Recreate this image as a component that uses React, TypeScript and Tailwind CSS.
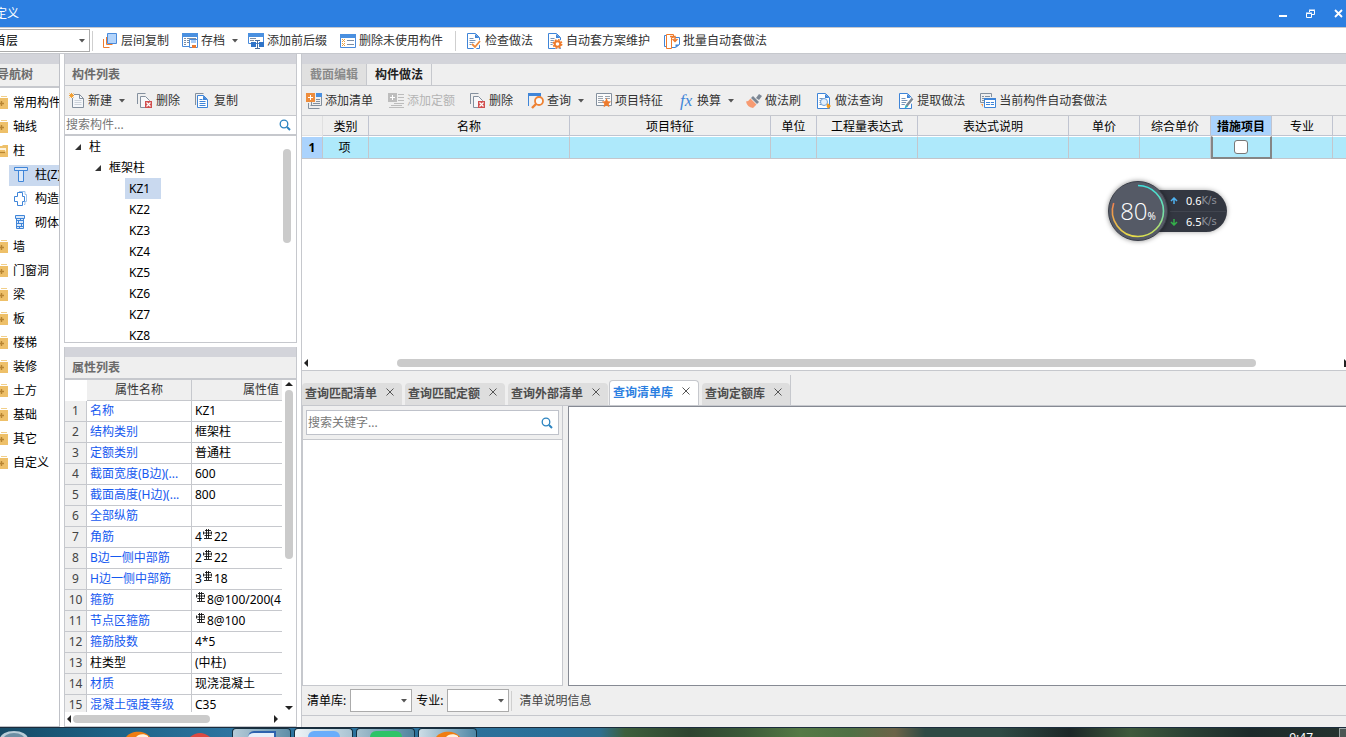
import { useState } from "react";
import type { ReactNode } from "react";

type IconProps = { children: ReactNode; className?: string };

function Icon({ children, className = "" }: IconProps) {
  return (
    <svg viewBox="0 0 16 16" className={`size-4 shrink-0 ${className}`} fill="none" aria-hidden="true">
      {children}
    </svg>
  );
}

const CopyLayers = () => (
  <Icon>
    <path d="M1.500 6v8.500h6M4.500 4v7.500h6" stroke="#ee7b2d" />
    <path d="M5.500.500h9v10h-9z" fill="#b3d4fb" stroke="#4a8bdb" />
  </Icon>
);
const Archive = () => (
  <Icon>
    <path d="M.5 1.500h15v12H.500z" fill="#fff" stroke="#4a8bdb" />
    <path d="M0 0h16v4H0z" fill="#4a90e0" />
    <path d="M2 5.500h2M5 5.500h9M2 7.500h2M5 7.500h2M2 9.500h2M5 9.500h2M2 11.500h2" stroke="#7d8ea3" />
    <path d="M7.500 6.500h8v8h-8z" fill="#fff" stroke="#4a8bdb" />
    <path d="M9 7h5v3H9z" fill="#a8ccf6" />
    <path d="M10 12h4v3h-4z" fill="#e97a32" />
  </Icon>
);
const Affix = () => (
  <Icon>
    <path d="M.5 1.500h15v9H.500z" fill="#fff" stroke="#4a8bdb" />
    <path d="M0 0h16v4H0z" fill="#4a90e0" />
    <path d="M2 5.500h6M2 7.500h4" stroke="#7d8ea3" />
    <path d="M3 9h5v5H3zM11 9h5v5h-5z" fill="#2f74c8" />
    <path d="M7 7.500h5M9.500 7.500v8M7 15.500h5" stroke="#4a6f9f" />
  </Icon>
);
const ListForm = () => (
  <Icon>
    <path d="M.5 2.500h15v12H.500z" fill="#fff" stroke="#4a8bdb" />
    <path d="M0 1h16v4H0z" fill="#4a90e0" />
    <path d="m2 6 3 3m0-3-3 3M2 10l3 3m0-3-3 3" stroke="#eda13c" />
    <path d="M7 7.500h7M7 11.500h7" stroke="#7d8ea3" />
  </Icon>
);
const BlueDoc = () => (
  <>
    <path d="M1.500.500h8l4 4v11h-12z" fill="#fff" stroke="#3f85d8" />
    <path d="M9 1v4h4.500z" fill="#3f85d8" />
    <path d="M3.500 5.500h4M3.500 7.500h6M3.500 9.500h5M3.500 11.500h4" stroke="#7795b8" />
  </>
);
const CheckDoc = () => (
  <Icon>
    <BlueDoc />
    <path d="m6 11 3 3 5.500-6" stroke="#fff" strokeWidth="4" />
    <path d="m6 11 3 3 5-6" stroke="#ee8a3b" strokeWidth="1.800" />
  </Icon>
);
const GearDoc = () => (
  <Icon>
    <BlueDoc />
    <circle cx="10.500" cy="11" r="5" fill="#fff" />
    <circle cx="10.500" cy="11" r="2.800" fill="#fff" stroke="#ee7b2d" strokeWidth="2" />
    <circle cx="10.500" cy="11" r="4.200" stroke="#ee7b2d" strokeWidth="1.500" strokeDasharray="1.8 1.500" />
  </Icon>
);
const Batch = () => (
  <Icon>
    <path d="M3 2.500H.500v11H3M11 4.500h4.500v7l-4 3H8" fill="#fff" stroke="#3f85d8" />
    <path d="M15.500 11.500h-4v3z" fill="#3f85d8" />
    <path d="M2.500 1.500h7v3h-2v11h-5z" fill="#fff" stroke="#ee7b2d" />
    <path d="M6 3.500h5v5M8.500 6l2.500 2.500L13.500 6" stroke="#ee7b2d" strokeWidth="1.500" />
  </Icon>
);
const NewDoc = () => (
  <Icon>
    <path d="M3.500 1.500h7l4 4v9h-11z" fill="#f5f7fa" stroke="#84909e" />
    <path d="M10.500 1.500v4h4" stroke="#84909e" />
    <path d="M5.500 7.500h7M5.500 9.500h7M5.500 11.500h7" stroke="#ccd2da" />
    <path d="M0 0h5v5H0z" fill="#efefef" />
    <path d="M.5.500l4 4M4.500.500l-4 4M2.500 0v5M0 2.500h5" stroke="#f2a033" />
  </Icon>
);
const DeleteDoc = () => (
  <Icon>
    <path d="M.5 11V.500h8" stroke="#84909e" />
    <path d="M3.500 3.500h5l4 4v7h-9z" fill="#f7f8fa" stroke="#84909e" />
    <path d="M8 8h7v7H8z" fill="#d14f4f" />
    <path d="m9.500 9.500 4 4m0-4-4 4" stroke="#fff" strokeWidth="1.200" />
  </Icon>
);
const CopyDoc = () => (
  <Icon>
    <path d="M.5 12V.500h8" stroke="#84909e" />
    <path d="M2.500 2.500h6l4 4v8h-10z" fill="#fff" stroke="#3f85d8" />
    <path d="M8 2.500v4.500h4.500z" fill="#3f85d8" />
    <path d="M4.500 6.500h3M4.500 8.500h6M4.500 10.500h6M4.500 12.500h6" stroke="#3f85d8" />
  </Icon>
);
const AddList = ({ off = false }: { off?: boolean }) => (
  <Icon>
    {off ? (
      <path d="M10 1.500h6M10 4.500h6M10 7.500h6M6 10.500h10M3 12.500h11M1 14.500h15" stroke="#bcbcbc" />
    ) : (
      <>
        <path d="M2.500 10v5.500h11M5.500 9v3.500M4.500 12.500h11V4" stroke="#84909e" />
        <path d="M10 0h6v4h-6z" fill="#4a90e0" />
        <path d="M10 6.500h4M10 8.500h4M7 10.500h7" stroke="#84909e" />
      </>
    )}
    <path d="M0 0h9v9H0z" fill={off ? "#bdbdbd" : "#ee8d3d"} />
    <path d="M4.500 2v5M2 4.500h5" stroke="#fff" />
  </Icon>
);
const QueryWin = () => (
  <Icon>
    <path d="M.5 13V.500h12V5" stroke="#3f85d8" />
    <path d="M0 0h13v3H0z" fill="#3f85d8" />
    <circle cx="11" cy="8" r="4" fill="#fafafa" stroke="#ee8233" strokeWidth="1.800" />
    <path d="m8 11-4 4" stroke="#ee8233" strokeWidth="2.400" />
  </Icon>
);
const Feature = () => (
  <Icon>
    <path d="M.5.500h15v12H.500z" fill="#fbfbfb" stroke="#84909e" />
    <path d="M2 3.500h5M2 5.500h5M9 3.500h5M9 5.500h5M2 7.500h6M2 9.500h5" stroke="#9aa3ae" />
    <path d="m10.500 5 1.400 3.200 3.300.400-2.500 2.200.700 3.400-2.900-1.700-2.900 1.700.700-3.400-2.500-2.200 3.300-.4z" fill="#ee7b2d" />
  </Icon>
);
const Fx = () => (
  <span className="w-4 shrink-0 text-center font-['Liberation_Serif',serif] text-[17px] leading-4 text-[#3f85d8] italic" aria-hidden="true">
    fx
  </span>
);
const Brush = () => (
  <Icon>
    <path d="m10 5 3-4 3 2-3 4z" fill="#7c8794" />
    <path d="m7 3 6 6-2 2-6-6z" fill="#7c8794" />
    <path d="m4.500 5.500 6 6-3.500 3.500Q1 14 0 8.500q3-.5 4.500-3z" fill="#f79b72" />
  </Icon>
);
const QueryDoc = () => (
  <Icon>
    <BlueDoc />
    <circle cx="8" cy="9" r="3.500" fill="#e6f0fb" stroke="#6aa0dc" />
    <path d="m11.500 10 3.500 3-3 3-1.500-3z" fill="#f39a1e" />
  </Icon>
);
const ExtractDoc = () => (
  <Icon>
    <BlueDoc />
    <path d="m8.500 13 6-7.500" stroke="#fff" strokeWidth="5" />
    <path d="m8.500 13 6-7.500" stroke="#7c8794" strokeWidth="2.500" />
    <path d="m6.500 15.500 1.200-3.500 2.300 1.800z" fill="#25b4c4" />
  </Icon>
);
const Windows = () => (
  <Icon>
    <path d="M4 9.500H.500v-9h11V4" stroke="#84909e" />
    <path d="M2 3.500h2M5 3.500h5M2 5.500h2M2 7.500h2" stroke="#84909e" />
    <path d="M4.500 5.500h11v9h-11z" fill="#fff" stroke="#3f85d8" />
    <path d="M4 5h12v2H4z" fill="#3f85d8" />
    <path d="M6 9.500h8M6 11.500h8" stroke="#3f85d8" strokeDasharray="4 .8" />
    <path d="M1 11h2v3z" fill="#f39a4e" />
  </Icon>
);
const SearchIcon = () => (
  <svg viewBox="0 0 12 12" className="size-3 shrink-0" fill="none" aria-hidden="true">
    <circle cx="5" cy="5" r="3.800" stroke="#2b83c0" strokeWidth="1.300" />
    <path d="m8 8 3 3" stroke="#2b83c0" strokeWidth="2" />
  </svg>
);
const Down = ({ className = "" }: { className?: string }) => (
  <svg viewBox="0 0 6 4" className={`h-1 w-1.5 shrink-0 ${className}`} aria-hidden="true">
    <path d="M0 0h6L3 3.500z" fill="#555" />
  </svg>
);
const Folder = ({ open = false }: { open?: boolean }) => (
  <Icon className="-ml-2">
    {open ? (
      <>
        <path d="M4 3h6l1-1h6v12H4z" fill="#eec069" />
        <path d="M5 5h9v3l-2 4H5z" fill="#fdf3df" />
        <path d="M0 7h13l2 7H0z" fill="#eec069" />
        <path d="M7 9.500h6" stroke="#b78432" strokeWidth="1.200" />
      </>
    ) : (
      <>
        <path d="M9 1.500h6" stroke="#f2cf8a" />
        <path d="M3 3h13v11H3z" fill="#eec069" />
        <path d="M7 8.500h5M9.500 6v5" stroke="#b78432" strokeWidth="1.400" />
      </>
    )}
  </Icon>
);
const Column = () => (
  <Icon>
    <path d="M1.500.500h13v3h-13zM5.500 3.500h5v11h-5z" fill="#dce9f9" stroke="#3f85d8" />
  </Icon>
);
const Structural = () => (
  <Icon>
    <path d="M6 .500h6v3h1.500v7H12v3h-1" stroke="#9cc3ee" />
    <path d="M4.500 1.500h5v4h2v5h-2v4h-5v-4h-3v-5h3z" fill="#fff" stroke="#3f85d8" />
  </Icon>
);
const Masonry = () => (
  <Icon>
    <path d="M2.500.500h9v3h-9zM3.500 3.500h7v10h-7z" fill="#dce9f9" stroke="#3f85d8" />
    <path d="M4 5.500h6M4 8.500h6M4 11.500h6M7.500 4v2M5.500 6v2M8.500 9v2M6.500 11v2" stroke="#3f85d8" />
  </Icon>
);
const Rebar = () => (
  <svg viewBox="0 0 10 10" className="mx-px mb-2 inline-block size-2.5 align-middle" fill="none" aria-hidden="true">
    <path d="M3.500 0v9M5.500 0v9M1 9.500h8M2 1.500h6M1.500 6.500h7M.500 2.500v3M8.500 2.500v3M1 4h7" stroke="#111" strokeWidth=".9" />
  </svg>
);

type Tool = { icon: ReactNode; label: string; menu?: boolean; off?: boolean };

function ToolButton({ icon, label, menu, off }: Tool) {
  return (
    <button
      type="button"
      disabled={off}
      className={`flex shrink-0 items-center gap-[3px] whitespace-nowrap ${menu ? "-mr-[3px]" : ""} ${off ? "text-[#b4b4b4]" : "text-[#333]"}`}
    >
      {icon}
      <span>{label}</span>
      {menu && <Down className="ml-1" />}
    </button>
  );
}

const mainTools: Tool[] = [
  { icon: <CopyLayers />, label: "层间复制" },
  { icon: <Archive />, label: "存档", menu: true },
  { icon: <Affix />, label: "添加前后缀" },
  { icon: <ListForm />, label: "删除未使用构件" },
];
const methodTools: Tool[] = [
  { icon: <CheckDoc />, label: "检查做法" },
  { icon: <GearDoc />, label: "自动套方案维护" },
  { icon: <Batch />, label: "批量自动套做法" },
];
const memberTools: Tool[] = [
  { icon: <NewDoc />, label: "新建", menu: true },
  { icon: <DeleteDoc />, label: "删除" },
  { icon: <CopyDoc />, label: "复制" },
];
const itemTools: Tool[] = [
  { icon: <AddList />, label: "添加清单" },
  { icon: <AddList off />, label: "添加定额", off: true },
  { icon: <DeleteDoc />, label: "删除" },
  { icon: <QueryWin />, label: "查询", menu: true },
  { icon: <Feature />, label: "项目特征" },
  { icon: <Fx />, label: "换算", menu: true },
  { icon: <Brush />, label: "做法刷" },
  { icon: <QueryDoc />, label: "做法查询" },
  { icon: <ExtractDoc />, label: "提取做法" },
  { icon: <Windows />, label: "当前构件自动套做法" },
];

const navTail = ["墙", "门窗洞", "梁", "板", "楼梯", "装修", "土方", "基础", "其它", "自定义"];
const members = ["KZ1", "KZ2", "KZ3", "KZ4", "KZ5", "KZ6", "KZ7", "KZ8"];

const properties: [string, ReactNode][] = [
  ["名称", "KZ1"],
  ["结构类别", "框架柱"],
  ["定额类别", "普通柱"],
  ["截面宽度(B边)(...", "600"],
  ["截面高度(H边)(...", "800"],
  ["全部纵筋", ""],
  ["角筋", <>4<Rebar />22</>],
  ["B边一侧中部筋", <>2<Rebar />22</>],
  ["H边一侧中部筋", <>3<Rebar />18</>],
  ["箍筋", <><Rebar />8@100/200(4</>],
  ["节点区箍筋", <><Rebar />8@100</>],
  ["箍筋肢数", "4*5"],
  ["柱类型", "(中柱)"],
  ["材质", "现浇混凝土"],
  ["混凝土强度等级", "C35"],
];

const columns: [string, string][] = [
  ["类别", "w-[46px]"],
  ["名称", "w-[201px]"],
  ["项目特征", "w-[201px]"],
  ["单位", "w-[46px]"],
  ["工程量表达式", "w-[101px]"],
  ["表达式说明", "w-[151px]"],
  ["单价", "w-[71px]"],
  ["综合单价", "w-[71px]"],
  ["措施项目", "w-[61px]"],
  ["专业", "w-[61px]"],
];

const queryTabs = ["查询匹配清单", "查询匹配定额", "查询外部清单", "查询清单库", "查询定额库"];

function TitleBar() {
  return (
    <header className="flex h-[27px] shrink-0 items-center justify-between bg-[#2c7fe1] text-white">
      <h1 className="-ml-[5px]">定义</h1>
      <div className="flex items-center gap-[19px] pr-[3px]">
        <button type="button" aria-label="最小化">
          <svg viewBox="0 0 9 9" className="size-[9px]"><path d="M1 6h8v2H1z" fill="#fff" /></svg>
        </button>
        <button type="button" aria-label="还原">
          <svg viewBox="0 0 9 9" className="size-[9px]" fill="none">
            <path d="M3.500 3V1.500h5v4H6M3 1h6M.500 4.500h5v4h-5zM0 4h6" stroke="#fff" />
          </svg>
        </button>
        <button type="button" aria-label="关闭">
          <svg viewBox="0 0 9 9" className="size-[9px]"><path d="m1 1 7 7m0-7L1 8" stroke="#fff" strokeWidth="1.800" /></svg>
        </button>
      </div>
    </header>
  );
}

function Strip() {
  return <div className="h-2.5 shrink-0 bg-[#d3d4da]" />;
}

function NavItem({ label, open }: { label: string; open?: boolean }) {
  return (
    <li className="flex h-6 items-center gap-[5px] whitespace-nowrap">
      <Folder open={open} />
      {label}
    </li>
  );
}

function SubItem({ label, icon, active }: { label: string; icon: ReactNode; active?: boolean }) {
  return (
    <li className="flex h-6 items-center pl-[9px]">
      <span className={`flex h-[21px] flex-1 items-center gap-1.5 overflow-hidden pl-1 whitespace-nowrap ${active ? "bg-[#c9d9ef]" : ""}`}>
        {icon}
        {label}
      </span>
    </li>
  );
}

function NavTree() {
  return (
    <nav className="flex w-[60px] shrink-0 flex-col overflow-hidden border-r border-b border-[#bfc1c7] bg-white text-black">
      <Strip />
      <h2 className="-ml-[3px] flex h-[22px] shrink-0 items-center bg-[#efefef] font-bold text-[#6b6b6b]">导航树</h2>
      <ul className="border-t-2 border-[#c6c8cd] pt-[3px]">
        <NavItem label="常用构件" />
        <NavItem label="轴线" />
        <NavItem label="柱" open />
        <SubItem label="柱(Z)" icon={<Column />} active />
        <SubItem label="构造" icon={<Structural />} />
        <SubItem label="砌体" icon={<Masonry />} />
        {navTail.map((n) => (
          <NavItem key={n} label={n} />
        ))}
      </ul>
    </nav>
  );
}

const Twisty = () => (
  <svg viewBox="0 0 6 6" className="size-1.5" aria-hidden="true"><path d="M6 0v6H0z" fill="#333" /></svg>
);

function MemberPanel() {
  const [active, setActive] = useState("KZ1");
  return (
    <section className="flex h-[289px] shrink-0 flex-col border-x border-b border-[#c6c8cd] bg-white">
      <Strip />
      <h2 className="flex h-[22px] shrink-0 items-center border-b border-[#c6c8cd] bg-[#efefef] pl-[7px] font-bold text-[#6b6b6b]">构件列表</h2>
      <div className="flex h-[30px] shrink-0 items-center gap-[15px] border-b border-[#c6c8cd] bg-[#efefef] pl-1">
        {memberTools.map((t) => (
          <ToolButton key={t.label} {...t} />
        ))}
      </div>
      <label className="flex h-5 shrink-0 items-center border-b-2 border-[#c6c8cd] pr-[5px]">
        <input aria-label="搜索构件" placeholder="搜索构件..." className="min-w-0 flex-1 pl-px outline-none placeholder:text-[#777]" />
        <SearchIcon />
      </label>
      <div className="flex min-h-0 flex-1 overflow-hidden">
        <ul className="flex-1 text-black">
          <li className="flex h-[21px] items-center gap-2 pl-2.5"><Twisty />柱</li>
          <li className="flex h-[21px] items-center gap-2 pl-[30px]"><Twisty />框架柱</li>
          {members.map((m) => (
            <li key={m} className="flex h-[21px] pl-[60px]">
              <button type="button" onClick={() => setActive(m)} className={`w-9 pl-1 text-left ${m === active ? "bg-[#c9d9ef]" : ""}`}>
                {m}
              </button>
            </li>
          ))}
        </ul>
        <div className="mt-[13px] mr-[5px] h-[94px] w-2 rounded-full bg-[#cbcbcb]" />
      </div>
    </section>
  );
}

function Arrow({ d }: { d: string }) {
  return <svg viewBox="0 0 8 8" className="size-2 shrink-0" aria-hidden="true"><path d={d} fill="#222" /></svg>;
}

function PropertyPanel() {
  return (
    <section className="mt-1 flex min-h-0 flex-1 flex-col border-x border-b border-[#c6c8cd] bg-white">
      <Strip />
      <h2 className="flex h-[23px] shrink-0 items-center border-b-2 border-[#c6c8cd] bg-[#efefef] pl-[7px] font-bold text-[#6b6b6b]">属性列表</h2>
      <div className="flex min-h-0 flex-1">
        <div className="min-w-0 flex-1 overflow-hidden">
          <table className="w-full table-fixed border-separate border-spacing-0 text-black">
            <thead>
              <tr className="h-[21px]">
                <th className="w-[22px]" />
                <th className="w-[105px] border-r border-b border-[#c6c8cd] bg-[#efefef] font-normal text-[#333]">属性名称</th>
                <th className="border-b border-[#c6c8cd] bg-[#efefef] pr-[3px] text-right font-normal text-[#333]">属性值</th>
              </tr>
            </thead>
            <tbody>
              {properties.map(([name, value], i) => (
                <tr key={name} className="h-[21px]">
                  <td className="border-r border-b border-[#c6c8cd] bg-[#efefef] p-0 text-center text-[#444]">{i + 1}</td>
                  <td className={`overflow-hidden border-r border-b border-[#c6c8cd] py-0 pr-0 pl-[3px] whitespace-nowrap ${name === "柱类型" ? "" : "text-[#1659f0]"}`}>{name}</td>
                  <td className="h-[21px] overflow-hidden border-b border-[#c6c8cd] py-0 pr-0 pl-[3px] whitespace-nowrap">
                    <div className="h-4 overflow-visible leading-4">{value}</div>
                  </td>
                </tr>
              ))}
            </tbody>
          </table>
        </div>
        <div className="flex w-3.5 flex-col items-center justify-between">
          <div className="flex flex-col items-center gap-0.5">
            <Arrow d="M0 6h8L4 2z" />
            <div className="h-[169px] w-2 rounded-full bg-[#cbcbcb]" />
          </div>
          <Arrow d="M0 2h8L4 6z" />
        </div>
      </div>
      <div className="flex h-3.5 shrink-0 items-center justify-between pr-4">
        <div className="flex items-center">
          <Arrow d="M6 0v8L2 4z" />
          <div className="h-2 w-[137px] rounded-full bg-[#cbcbcb]" />
        </div>
        <Arrow d="M2 0v8l4-4z" />
      </div>
    </section>
  );
}

function ItemGrid() {
  return (
    <table className="w-full table-fixed border-separate border-spacing-0 text-black">
      <thead>
        <tr className="h-5">
          <th className="w-[21px] border-r border-b border-[#e0e0e0] bg-[#efefef]" />
          {columns.map(([c, w]) => (
            <th key={c} className={`${w} border-r border-b border-[#c0c4d0] pt-0.5 whitespace-nowrap ${c === "措施项目" ? "bg-[#abd3fd] font-bold" : "bg-[#efefef] font-normal"}`}>
              {c}
            </th>
          ))}
          <th className="border-b border-[#c0c4d0] bg-[#efefef]" />
        </tr>
      </thead>
      <tbody>
        <tr className="h-[23px]">
          <td className="border-t border-r border-b border-t-white border-r-[#c4c6cc] border-b-[#c4c6cc] bg-[#abd3fd] text-center font-bold">1</td>
          {columns.map(([c]) => (
            <td
              key={c}
              className={`border-t border-b border-t-white bg-[#aee9fb] pr-0.5 text-center ${c === "措施项目" ? "border-r-2 border-b-2 border-l-2 border-r-[#858585] border-b-[#858585] border-l-[#858585]" : "border-r border-r-[#c4c6cc] border-b-[#c4c6cc]"}`}
            >
              {c === "类别" && "项"}
              {c === "措施项目" && (
                <input type="checkbox" aria-label="措施项目" className="mx-auto block size-3.5 appearance-none rounded-[3px] border border-[#777] bg-white checked:bg-[#2c7fe1]" />
              )}
            </td>
          ))}
          <td className="border-t border-b border-t-white border-b-[#c4c6cc] bg-[#aee9fb]" />
        </tr>
      </tbody>
    </table>
  );
}

function Rate({ value, color, d }: { value: string; color: string; d: string }) {
  return (
    <p className="flex h-[21px] items-center border-t border-[#41454f] text-white first:border-transparent">
      <svg viewBox="0 0 8 8" className="mr-2 size-2 shrink-0" fill="none">
        <path d={d} stroke={color} strokeWidth="1.500" />
      </svg>
      {value}
      <span className="font-['DejaVu_Sans',sans-serif] text-[10px] text-[#8d9099]">K/s</span>
    </p>
  );
}

function SpeedWidget() {
  return (
    <aside className="absolute top-[127px] right-[119px] flex h-[60px] w-[119px] items-center">
      <div className="ml-7 h-[42px] flex-1 overflow-hidden rounded-r-full bg-[#333741] pl-[34px] text-[11px] shadow-[0_0_5px_rgba(0,0,0,0.35)]">
        <Rate value="0.6" color="#4fb2f0" d="M4 7V2M1 4l3-3 3 3" />
        <Rate value="6.5" color="#34b04a" d="M4 1v5M1 4l3 3 3-3" />
      </div>
      <div className="absolute top-0 left-0 flex size-[60px] items-center justify-center rounded-full border border-[#3b3f49] bg-[#555a66] text-white shadow-[0_0_5px_rgba(0,0,0,0.45)]">
        <svg viewBox="0 0 60 60" className="absolute size-[60px]" fill="none" aria-hidden="true">
          <defs>
            <linearGradient id="ringRight" x1="0" y1="0" x2="0" y2="1">
              <stop offset="0" stopColor="#3fe0dc" />
              <stop offset=".6" stopColor="#7ce0a0" />
              <stop offset="1" stopColor="#dbe04e" />
            </linearGradient>
            <linearGradient id="ringLeft" x1="0" y1="0" x2="0" y2="1">
              <stop offset="0" stopColor="#f0804e" />
              <stop offset="1" stopColor="#e6dc4a" />
            </linearGradient>
          </defs>
          <path d="M30 4.500a25.500 25.500 0 0 1 0 51" stroke="url(#ringRight)" strokeWidth="1.600" />
          <path d="M30 55.500A25.500 25.500 0 0 1 5.700 22" stroke="url(#ringLeft)" strokeWidth="1.600" />
        </svg>
        <span className="font-['Open_Sans','Noto_Sans',sans-serif] text-2xl leading-none font-light">80</span>
        <span className="pt-2.5 text-[10px] leading-none">%</span>
      </div>
    </aside>
  );
}

function QueryPane() {
  const [active, setActive] = useState("查询清单库");
  return (
    <section className="flex min-h-0 flex-1 flex-col bg-[#efefef] pt-[5px]">
      <div className="flex h-[30px] shrink-0 items-end border-b border-[#c6c8cd]">
        <div role="tablist" className="flex h-[30px] items-end gap-[3px] border-r border-[#c6c8cd]">
          {queryTabs.map((t) => {
            const on = t === active;
            return (
              <div
                key={t}
                className={`flex justify-between rounded-t px-[3px] ${on ? "-ml-0.5 h-[25px] w-[90px] border border-b-0 border-[#c6c8cd] bg-white" : `h-[22px] bg-[#dedede] ${t.length > 5 ? "w-[100px]" : "w-[88px]"}`}`}
              >
                <button type="button" role="tab" aria-selected={on} onClick={() => setActive(t)} className={`font-bold whitespace-nowrap ${on ? "text-[#2c7fe1]" : "text-[#4d4d4d]"}`}>
                  {t}
                </button>
                <button type="button" aria-label={`关闭${t}`} className="-mt-1 mr-[5px]">
                  <svg viewBox="0 0 8 8" className="size-2" fill="none"><path d="m.5.500 7 7m0-7-7 7" stroke="#555" /></svg>
                </button>
              </div>
            );
          })}
        </div>
      </div>
      <div className="flex min-h-0 flex-1">
        <div className="flex w-[261px] shrink-0 flex-col border-x border-b border-[#c6c8cd] bg-white">
          <div className="border-b border-[#c6c8cd] bg-[#efefef] px-[3px] py-1">
            <label className="flex h-[25px] items-center border border-[#bfc2ca] bg-white pr-[5px]">
              <input aria-label="搜索关键字" placeholder="搜索关键字..." className="min-w-0 flex-1 pl-px outline-none placeholder:text-[#777]" />
              <SearchIcon />
            </label>
          </div>
        </div>
        <div className="ml-[5px] flex-1 border-y border-l border-[#868a93] bg-white" />
      </div>
      <div className="flex h-[30px] shrink-0 items-center border-b border-[#c6c8cd] pl-[5px] text-black">
        <label htmlFor="library">清单库:</label>
        <Dropdown id="library" options={[""]} className="ml-1 w-[62px] border" />
        <label htmlFor="trade" className="ml-1">专业:</label>
        <Dropdown id="trade" options={[""]} className="ml-1 w-[62px] border" />
        <span className="ml-0.5 h-5 border-l border-[#cfcfcf] pl-[7px] leading-5 text-[#444]">清单说明信息</span>
      </div>
      <div className="h-[11px] shrink-0" />
    </section>
  );
}

function Dropdown({ id, options, className, selectClass = "w-full" }: { id: string; options: string[]; className: string; selectClass?: string }) {
  return (
    <div className={`relative h-[23px] shrink-0 overflow-hidden border-[#ababab] bg-white ${className}`}>
      <select id={id} className={`h-full appearance-none text-black outline-none ${selectClass}`}>
        {options.map((o) => (
          <option key={o}>{o}</option>
        ))}
      </select>
      <Down className="pointer-events-none absolute top-[9px] right-1" />
    </div>
  );
}

function Swoosh() {
  return (
    <svg viewBox="0 0 24 6" className="h-1.5 w-6" fill="none" aria-hidden="true">
      <path d="M0 6C4 0 18-2 24 6z" fill="#f07d12" />
      <path d="M10 6c2-3 8-4 12-1v1z" fill="#fff3df" />
    </svg>
  );
}

function Taskbar() {
  const task = "flex h-full w-[59px] items-end justify-center rounded-t-sm border border-b-0 border-[#16303f]";
  return (
    <footer className="flex h-2.5 shrink-0 items-stretch overflow-hidden border-t border-[#1b2c3c] bg-[linear-gradient(90deg,#164a66_0,#1f6488_120px,#2d74a0_230px,#2a6f98_560px,#2f6f8f_600px,#3d5f3c_625px,#2e4430_690px,#3b5a38_745px,#557a45_800px,#4f7144_850px,#6b6347_895px,#2f4a44_925px,#2f4a44_1000px,#1c2727_1070px,#3f5a3c_1130px,#2a4034_1190px,#1d2a2a_1250px,#25332f_100%)]">
      <svg viewBox="0 0 30 8" className="mt-0.5 h-2 w-[30px] shrink-0" aria-hidden="true">
        <ellipse cx="14" cy="9" rx="14" ry="8" fill="#b9cdd8" />
        <ellipse cx="14" cy="10" rx="11" ry="7" fill="#6c8ea3" />
      </svg>
      <div className="ml-24 flex items-end"><Swoosh /></div>
      <div className="ml-10 flex items-end">
        <svg viewBox="0 0 20 4" className="h-1 w-5" aria-hidden="true"><path d="M0 4q10-8 20 0z" fill="#dc4a41" /></svg>
      </div>
      <div className="ml-[22px] flex gap-[3px]">
        <div className={`${task} bg-[linear-gradient(90deg,#b5cbd8,#5f8ea8)]`}>
          <div className="h-1.5 w-7 rounded-tl-lg border-t-2 border-r-2 border-[#2d62ae] bg-[#e6effa]" />
        </div>
        <div className={`${task} bg-[linear-gradient(90deg,#eef4f7,#a9c3d2)]`}><div className="h-1.5 w-8 rounded-t-lg bg-[#69adfb]" /></div>
        <div className={`${task} bg-[linear-gradient(90deg,#a5c0ce,#4f849f)]`}><div className="h-1.5 w-8 rounded-t-lg bg-[#2ec467]" /></div>
        <div className={`${task} bg-[linear-gradient(90deg,#cddde6,#4f87a6)]`}><Swoosh /></div>
      </div>
      <time className="mt-1 mr-[26px] ml-auto leading-3 text-white">9:47</time>
      <div className="w-[7px] border-t border-l border-[#9aa5a5] bg-[#4b5754]" />
    </footer>
  );
}

export default function App() {
  const sep = "h-5 w-px shrink-0 bg-[#cfcfcf]";
  return (
    <div className="flex h-screen flex-col overflow-hidden bg-white font-['Noto_Sans','Noto_Sans_CJK_SC',sans-serif] text-[12px] leading-4 text-[#222]">
      <TitleBar />
      <div className="flex h-[27px] shrink-0 items-center gap-[13px] border-y border-[#c6c8cd] bg-white">
        <div className="flex items-center gap-0.5">
          <Dropdown id="floor" options={["首层"]} className="w-[90px] border-y border-r" selectClass="-ml-1.5 w-24" />
          <span className={sep} />
        </div>
        <div className="-ml-1 flex items-center gap-[13px]">
          {mainTools.map((t) => (
            <ToolButton key={t.label} {...t} />
          ))}
        </div>
        <div className="-ml-px flex items-center gap-[14px]">
          <span className={`${sep} -mr-1`} />
          {methodTools.map((t) => (
            <ToolButton key={t.label} {...t} />
          ))}
        </div>
      </div>
      <div className="flex min-h-0 flex-1">
        <NavTree />
        <div className="ml-1 flex w-[233px] shrink-0 flex-col">
          <MemberPanel />
          <PropertyPanel />
        </div>
        <main className="relative ml-1 flex min-w-0 flex-1 flex-col border-l border-[#c6c8cd]">
          <Strip />
          <div role="tablist" className="flex h-[22px] shrink-0 border-b border-[#c6c8cd] bg-[#efefef] font-bold">
            <button type="button" role="tab" aria-selected={false} className="w-[65px] border-r border-[#c6c8cd] bg-[#e0e0e0] text-[#8a8a8a]">截面编辑</button>
            <button type="button" role="tab" aria-selected className="w-[65px] border-r border-[#c6c8cd] text-[#222]">构件做法</button>
          </div>
          <div className="flex h-[30px] shrink-0 items-center gap-[15px] border-b border-[#c6c8cd] bg-[#efefef] pl-1">
            {itemTools.map((t) => (
              <ToolButton key={t.label} {...t} />
            ))}
          </div>
          <div className="flex h-[255px] shrink-0 flex-col justify-between border-b border-[#c6c8cd] bg-white">
            <ItemGrid />
            <div className="flex h-[15px] items-center">
              <Arrow d="M6 0v8L2 4z" />
              <div className="ml-[87px] h-2 flex-1 rounded-full bg-[#cbcbcb]" />
              <div className="w-[86px]" />
              <svg viewBox="0 0 4 8" className="h-2 w-1" aria-hidden="true"><path d="M2 0v8h2V2z" fill="#222" /></svg>
            </div>
          </div>
          <QueryPane />
          <SpeedWidget />
        </main>
      </div>
      <Taskbar />
    </div>
  );
}
